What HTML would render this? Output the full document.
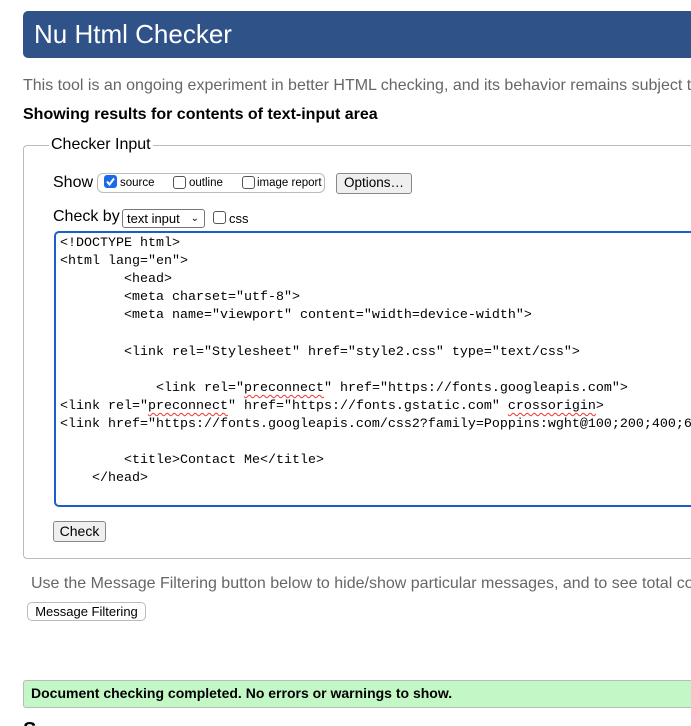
<!DOCTYPE html>
<html style="overflow:hidden"><head><style>
html,body{overflow:hidden}
body{margin:0;width:691px;height:726px;overflow:hidden;background:#fff;font-family:"Liberation Sans",Arial,sans-serif;color:#000;position:relative}
.a{position:absolute;white-space:nowrap}
.clip{position:absolute;left:0;top:0;width:691px;height:726px;overflow:hidden}
.hdr{left:23px;top:11px;width:690px;height:47px;background:#2f5388;border-radius:5px}
.hdr span{position:absolute;left:11px;top:8px;font-size:26px;color:#fff}
.btn{position:absolute;background:#efefef;border:1px solid #888;border-radius:3px;font-size:13.5px;text-align:center;box-sizing:border-box;line-height:18px}
.cb{display:inline-block;width:12px;height:12px;border:1px solid #555;border-radius:3px;vertical-align:-1px;box-sizing:border-box;background:#fff}
pre{margin:0;font-family:"Liberation Mono",monospace;font-size:13.33px;line-height:18.1px;white-space:pre}
.sq{text-decoration:underline wavy #e33;text-decoration-thickness:1px;text-underline-offset:3px}
</style></head><body><div class="clip">
<div class="a hdr"><span>Nu Html Checker</span></div>
<div class="a" style="left:23px;top:77px;font-size:16px;color:#666">This tool is an ongoing experiment in better HTML checking, and its behavior remains subject to change</div>
<div class="a" style="left:23px;top:106px;font-size:16px;font-weight:bold">Showing results for contents of text-input area</div>
<div class="a" style="left:23px;top:145px;width:690px;height:412px;border:1px solid #bbb;border-radius:4px"></div>
<div class="a" style="left:49px;top:136px;padding:0 2px;background:#fff;font-size:16px">Checker Input</div>
<div class="a" style="left:53px;top:174px;font-size:16px">Show</div>
<div class="a" style="left:97px;top:173px;width:228px;height:20px;border:1px solid #bbb;border-radius:6px;box-sizing:border-box"></div>
<div class="a" style="left:104px;top:175px;width:13px;height:13px;background:#1a6ae8;border-radius:3px"><svg width="13" height="13"><path d="M3 6.5l2.5 3L10 3.5" stroke="#fff" stroke-width="2" fill="none"/></svg></div>
<div class="a" style="left:120px;top:177px;font-size:11.5px">source</div>
<div class="a" style="left:173px;top:175px"><span class="cb" style="width:13px;height:13px"></span></div>
<div class="a" style="left:189px;top:177px;font-size:11.5px">outline</div>
<div class="a" style="left:242px;top:175px"><span class="cb" style="width:13px;height:13px"></span></div>
<div class="a" style="left:257px;top:177px;font-size:11.5px">image report</div>
<div class="btn" style="left:336px;top:173px;width:76px;height:21px">Options…</div>
<div class="a" style="left:53px;top:208px;font-size:16px">Check by</div>
<div class="a" style="left:122px;top:209px;width:83px;height:19px;border:1px solid #777;border-radius:3px;box-sizing:border-box;font-size:13px;line-height:17px;padding-left:4px">text input <span style="position:absolute;right:5px;top:0;font-size:10px">&#x2304;</span></div>
<div class="a" style="left:213px;top:210px"><span class="cb" style="width:13px;height:13px"></span></div>
<div class="a" style="left:229px;top:211px;font-size:13px">css</div>
<div class="a" style="left:54px;top:231px;width:690px;height:276px;border:2px solid #1a5fc8;border-radius:5px;box-sizing:border-box;overflow:hidden">
<pre style="position:absolute;left:4px;top:2px">&lt;!DOCTYPE html&gt;
&lt;html lang="en"&gt;
        &lt;head&gt;
        &lt;meta charset="utf-8"&gt;
        &lt;meta name="viewport" content="width=device-width"&gt;

        &lt;link rel="Stylesheet" href="style2.css" type="text/css"&gt;

            &lt;link rel="<span class="sq">preconnect</span>" href="https://fonts.googleapis.com"&gt;
&lt;link rel="<span class="sq">preconnect</span>" href="https://fonts.gstatic.com" <span class="sq">crossorigin</span>&gt;
&lt;link href="https://fonts.googleapis.com/css2?family=Poppins:wght@100;200;400;600

        &lt;title&gt;Contact Me&lt;/title&gt;
    &lt;/head&gt;</pre></div>
<div class="btn" style="left:53px;top:521px;width:53px;height:21px;font-size:14px">Check</div>
<div class="a" style="left:31px;top:575px;font-size:16px;color:#666">Use the Message Filtering button below to hide/show particular messages, and to see total counts</div>
<div class="btn" style="left:27px;top:602px;width:119px;height:19px;background:#fff;border-color:#bbb;border-radius:5px;font-size:13px;line-height:17px">Message Filtering</div>
<div class="a" style="left:23px;top:680px;width:690px;height:28px;background:#c3f7c6;border:1px solid #bbb;border-radius:3px;box-sizing:border-box"></div>
<div class="a" style="left:31px;top:685px;font-size:14px;font-weight:bold">Document checking completed. No errors or warnings to show.</div>
<div class="a" style="left:23px;top:719px;font-size:20px;font-weight:bold">S</div>
</div></body></html>
